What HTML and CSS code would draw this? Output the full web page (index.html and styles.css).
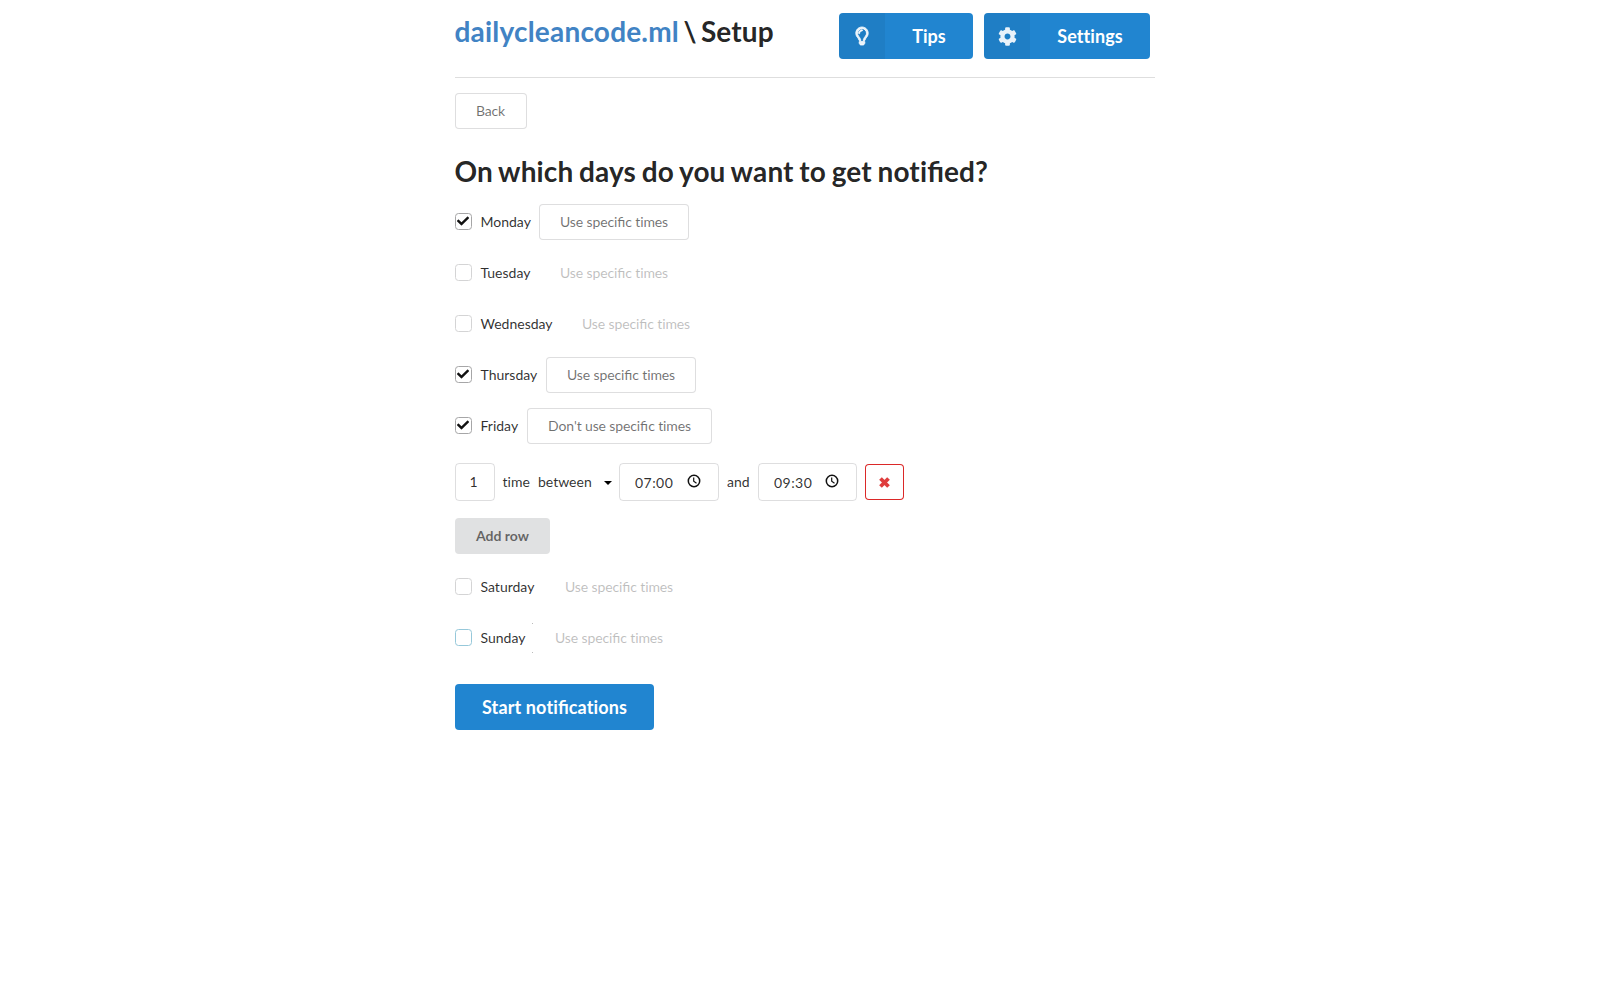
FILE: index.html
```html
<!DOCTYPE html>
<html lang="en">
<head>
<meta charset="utf-8">
<title>dailycleancode.ml - Setup</title>
<link rel="stylesheet" href="styles.css">
</head>
<body>
<svg width="0" height="0" class="defs">
  <symbol id="check" viewBox="0 0 512 512"><path d="M173.9 439.4l-166.4-166.4c-10-10-10-26.2 0-36.2l36.2-36.2c10-10 26.200-10 36.200 0L192 312.700 432.100 72.600c10-10 26.200-10 36.200 0l36.200 36.200c10 10 10 26.200 0 36.200l-294.400 294.400c-10 10-26.200 10-36.200 0z"/></symbol>
  <symbol id="clock" viewBox="0 0 14 14"><circle cx="7" cy="7" r="5.700" fill="none" stroke="#111" stroke-width="1.500"/><path d="M6.700 3.500v3.800l2.800 1.900" fill="none" stroke="#111" stroke-width="1.200"/></symbol>
</svg>
<main class="page">
  <header class="top">
    <h1 class="title"><a class="brand">dailycleancode.ml</a> \ Setup</h1>
    <nav class="actions">
      <button class="big tips"><span class="icon"><svg width="14" height="18" viewBox="0 0 352 512"><path fill="currentColor" stroke="currentColor" stroke-width="26" d="M176 80c-52.940 0-96 43.060-96 96 0 8.840 7.160 16 16 16s16-7.160 16-16c0-35.300 28.720-64 64-64 8.840 0 16-7.160 16-16s-7.160-16-16-16zM96.060 459.170c0 3.150.93 6.220 2.680 8.840l24.510 36.840c2.970 4.460 7.970 7.140 13.320 7.140h78.850c5.360 0 10.360-2.680 13.320-7.140l24.510-36.840c1.740-2.620 2.670-5.700 2.680-8.840l.05-43.180H96.020l.04 43.180zM176 0C73.720 0 0 82.970 0 176c0 44.370 16.450 84.850 43.560 115.780 16.640 18.990 42.740 58.800 52.420 92.160v.06h48v-.12c-.01-4.770-.72-9.510-2.150-14.070-5.590-17.810-22.820-64.770-62.170-109.670-20.540-23.430-31.520-53.150-31.610-84.140-.2-73.640 59.670-128 127.950-128 70.580 0 128 57.420 128 128 0 30.970-11.240 60.850-31.650 84.140-39.110 44.610-56.420 91.470-62.100 109.460a47.507 47.507 0 0 0-2.220 14.300v.1h48v-.05c9.680-33.370 35.780-73.180 52.420-92.160C335.550 260.850 352 220.370 352 176 352 78.800 273.200 0 176 0z"/></svg></span><span class="label">Tips</span></button>
      <button class="big settings"><span class="icon"><svg width="19" height="19" viewBox="0 0 512 512"><path fill="currentColor" d="M487.400 315.700l-42.600-24.600c4.300-23.200 4.300-47 0-70.200l42.600-24.600c4.900-2.800 7.100-8.600 5.500-14-11.100-35.600-30-67.800-54.700-94.600-3.800-4.100-10-5.100-14.800-2.300L380.800 110c-17.900-15.400-38.500-27.300-60.800-35.100V25.800c0-5.600-3.900-10.500-9.400-11.700-36.700-8.200-74.300-7.800-109.200 0-5.500 1.200-9.400 6.100-9.400 11.700V75c-22.200 7.900-42.800 19.800-60.800 35.100L88.700 85.500c-4.900-2.800-11-1.900-14.800 2.300-24.700 26.700-43.600 58.900-54.700 94.600-1.700 5.400.6 11.200 5.500 14L67.300 221c-4.300 23.200-4.300 47 0 70.200l-42.600 24.600c-4.900 2.800-7.100 8.600-5.500 14 11.100 35.600 30 67.800 54.700 94.600 3.800 4.100 10 5.100 14.800 2.300l42.600-24.600c17.900 15.400 38.500 27.300 60.800 35.100v49.200c0 5.600 3.900 10.500 9.400 11.700 36.700 8.200 74.300 7.800 109.200 0 5.500-1.200 9.400-6.100 9.400-11.700v-49.200c22.200-7.900 42.800-19.800 60.800-35.100l42.600 24.600c4.900 2.800 11 1.900 14.800-2.300 24.700-26.700 43.600-58.900 54.700-94.600 1.500-5.500-.7-11.300-5.600-14.100zM256 336c-44.100 0-80-35.900-80-80s35.900-80 80-80 80 35.900 80 80-35.900 80-80 80z"/></svg></span><span class="label">Settings</span></button>
    </nav>
  </header>
  <button class="btn back">Back</button>
  <h1 class="title question">On which days do you want to get noti<span class="fi">fi</span>ed?</h1>

  <div class="day"><span class="box on"><svg class="tick"><use href="#check"/></svg></span><label class="name mon">Monday</label><button class="btn times">Use speci<span class="fi">fi</span>c times</button></div>
  <div class="day"><span class="box"></span><label class="name mon">Tuesday</label><button class="btn times off">Use speci<span class="fi">fi</span>c times</button></div>
  <div class="day"><span class="box"></span><label class="name wed">Wednesday</label><button class="btn times off">Use speci<span class="fi">fi</span>c times</button></div>
  <div class="day"><span class="box on"><svg class="tick"><use href="#check"/></svg></span><label class="name thu">Thursday</label><button class="btn times">Use speci<span class="fi">fi</span>c times</button></div>
  <div class="day"><span class="box on"><svg class="tick"><use href="#check"/></svg></span><label class="name fri">Friday</label><button class="btn dont">Don't use speci<span class="fi">fi</span>c times</button></div>

  <div class="row">
    <span class="field count">1</span>
    <span class="word time">time</span>
    <span class="word between">between</span>
    <svg class="caret" width="8" height="4" viewBox="0 0 8 4"><path d="M0 0h8L4 4z"/></svg>
    <span class="field clock"><span class="value">07:00</span><svg width="14" height="14"><use href="#clock"/></svg></span>
    <span class="word and">and</span>
    <span class="field clock second"><span class="value">09:30</span><svg width="14" height="14"><use href="#clock"/></svg></span>
    <button class="remove"><svg width="13" height="13" viewBox="0 0 13 13"><path d="M2.500 2.500l8 8M10.500 2.500l-8 8" stroke="#db2828" stroke-opacity=".9" stroke-width="3.800"/></svg></button>
  </div>
  <button class="add">Add row</button>

  <div class="day"><span class="box"></span><label class="name sat">Saturday</label><button class="btn times off">Use speci<span class="fi">fi</span>c times</button></div>
  <div class="day"><span class="box hover"></span><label class="name sun">Sunday</label><span class="corners"></span><button class="btn times off">Use speci<span class="fi">fi</span>c times</button></div>
  <button class="big start"><span class="label">Start noti<span class="fi">fi</span>cations</span></button>
</main>
</body>
</html>
```

FILE: styles.css
```css
* { box-sizing: border-box; }
body { margin: 0; background: #fff; color: rgba(0,0,0,.82); font: 14px/20px Lato, sans-serif; }
button { font-family: inherit; margin: 0; padding: 0; border: 0; }
.defs { position: absolute; }
.page { width: 700px; margin-left: 455px; display: flex; flex-direction: column; align-items: flex-start; }
.top { width: 700px; height: 78px; padding: 13px 5px 0 0; border-bottom: 1px solid #dedede; display: flex; justify-content: space-between; align-items: flex-start; }
.title { margin: 0; color: rgba(0,0,0,.87); font-size: 28px; line-height: 36px; font-weight: 700; white-space: nowrap; letter-spacing: .14px; word-spacing: -2.6px; text-indent: -.5px; }
.fi { letter-spacing: 0; }
.brand { color: #4183c4; letter-spacing: .2px; }
.actions { display: flex; gap: 11px; }
.big { height: 46px; border-radius: 4px; background: #2185d0; color: #fff; font-size: 18px; font-weight: 700; letter-spacing: .05px; display: flex; align-items: stretch; overflow: hidden; }
.tips { width: 134px; }
.settings { width: 166px; }
.icon { width: 46px; background: rgba(0,0,0,.05); display: flex; align-items: center; justify-content: center; color: rgba(255,255,255,.9); }
.icon svg { overflow: visible; }
.label { flex: 1; line-height: 46px; text-align: center; }
.btn { height: 36px; border-radius: 4px; box-shadow: inset 0 0 0 1px rgba(34,36,38,.15); background: #fff; color: rgba(0,0,0,.56); font-size: 14px; line-height: 36px; letter-spacing: -.12px; text-align: center; }
.back { width: 72px; margin-top: 15px; padding-right: 1px; }
.question { margin: 24px 0 15px; word-spacing: -1.3px; }
.day { height: 36px; margin-bottom: 15px; display: flex; align-items: center; }
.box { width: 17px; height: 17px; margin: -1px 8.5px 0 0; padding: 0 1px 1px 0; border: 1px solid #d4d4d5; border-radius: 3.5px; display: flex; align-items: center; justify-content: center; }
.on { border-color: #a6a6a7; }
.hover { border-color: #96c8da; }
.tick { width: 12px; height: 12px; flex: none; fill: #111; }
.name { white-space: nowrap; }
.mon { width: 58.5px; }
.wed { width: 80.5px; }
.thu { width: 65.5px; }
.fri { width: 46.5px; }
.sat { width: 63.5px; }
.sun { width: 51.5px; }
.times { width: 150px; }
.dont { width: 185px; }
.off { opacity: .45; box-shadow: none; }
.corners { width: 1px; height: 30px; margin-right: 1px; border: solid #bbb; border-width: 1px 0; }
.row { height: 38px; margin-top: 4px; display: flex; align-items: center; }
.field { height: 38px; border: 1px solid rgba(34,36,38,.15); border-radius: 4px; display: flex; align-items: center; }
.count { width: 40px; justify-content: center; padding-right: 3px; }
.word { white-space: nowrap; font-variant-ligatures: none; }
.time { width: 35.5px; margin-left: 7.5px; }
.between { width: 65px; }
.caret { margin: 1px 7px 0 1px; }
.clock { width: 100px; padding: 1px 17px 0 15px; justify-content: space-between; }
.clock svg { margin-top: -3px; }
.value { letter-spacing: .45px; }
.and { width: 31px; margin-left: 8px; }
.second { width: 99px; }
.remove { width: 39px; height: 36px; margin-left: 8px; border-radius: 4px; background: #fff; box-shadow: inset 0 0 0 1px #db2828; display: flex; align-items: center; justify-content: center; }
.add { width: 95px; height: 36px; margin: 17px 0 15px; padding: 0 0 2px; border-radius: 4px; background: #e0e1e2; color: rgba(0,0,0,.56); font-size: 14px; font-weight: 700; }
.start { width: 199px; margin-top: 13px; letter-spacing: .13px; }
```
